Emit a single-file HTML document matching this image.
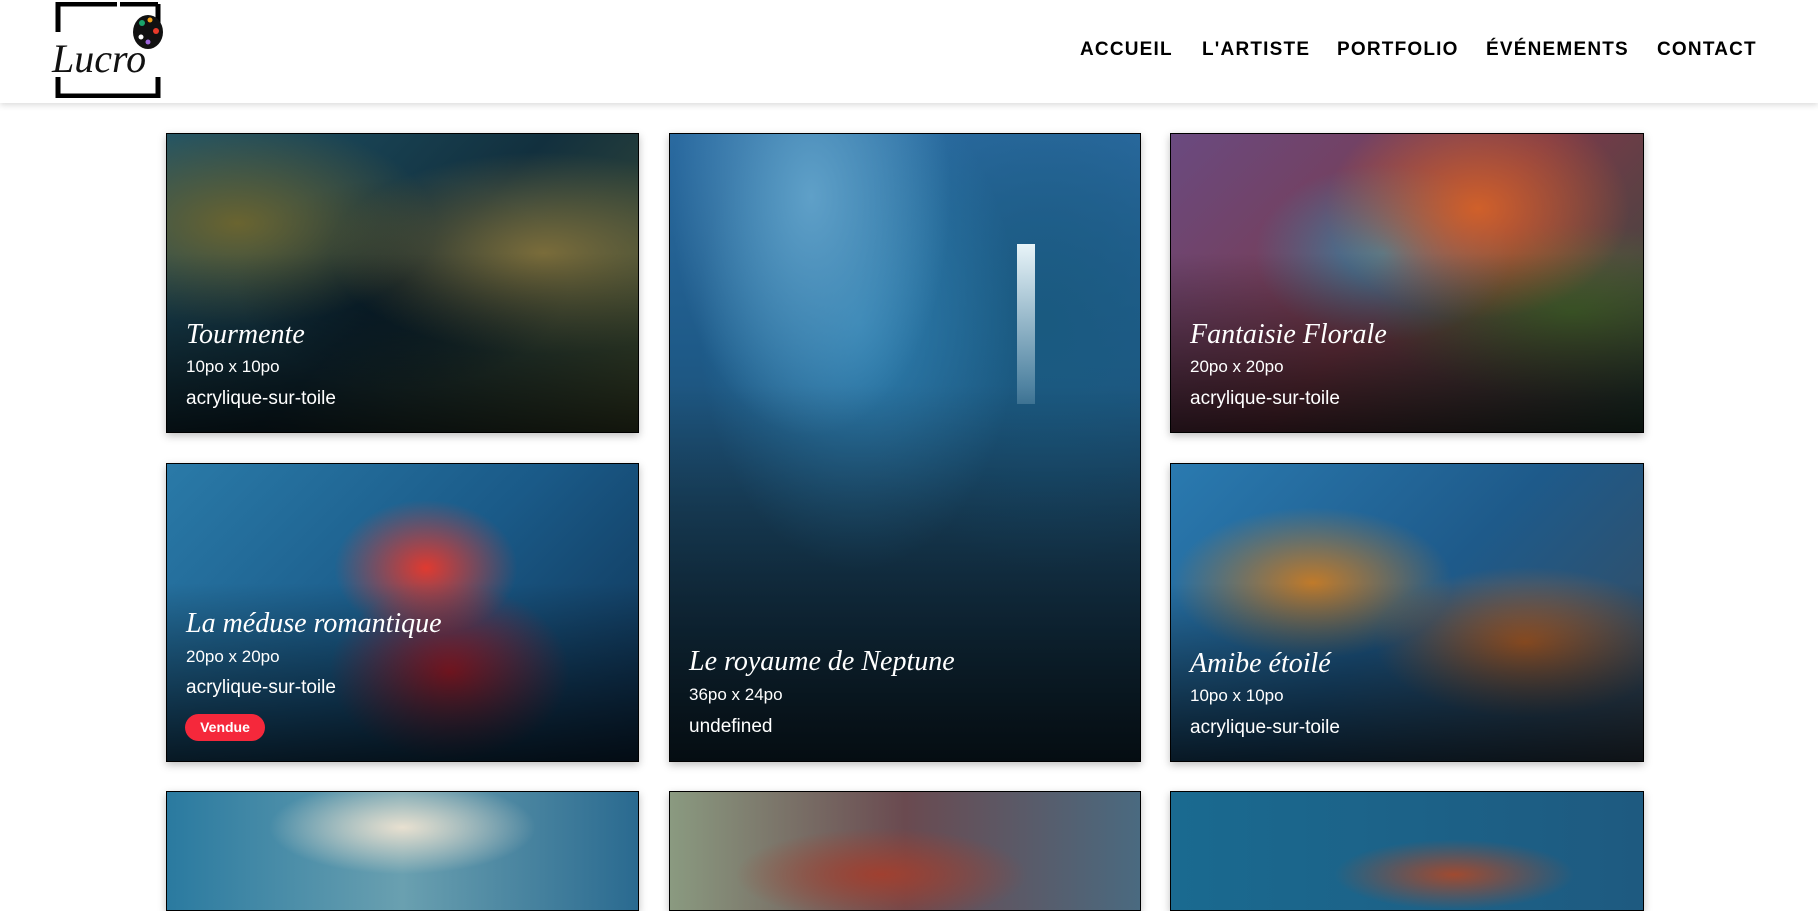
<!DOCTYPE html>
<html><head><meta charset="utf-8"><style>
*{margin:0;padding:0;box-sizing:border-box}
body{width:1818px;height:892px;overflow:hidden;background:#fff;font-family:"Liberation Sans",sans-serif;position:relative}
.hdr{position:absolute;left:0;top:0;width:1818px;height:103px;background:#fff;box-shadow:0 2px 6px rgba(0,0,0,.15);z-index:5}
.nav{position:absolute;top:39px;font-weight:bold;font-size:19px;letter-spacing:1.2px;color:#000}
.card{position:absolute;border:1px solid #000;overflow:hidden;box-shadow:0 3px 8px rgba(0,0,0,.25)}
.card .sh{position:absolute;left:0;right:0;bottom:0;height:60%;background:linear-gradient(to bottom,rgba(0,0,0,0),rgba(0,0,0,.75))}
.t{position:absolute;left:19px;color:#fff;font-family:"Liberation Serif",serif;font-style:italic;font-size:28px}
.d{position:absolute;left:19px;color:#fff;font-size:17px}
.m{position:absolute;left:19px;color:#fff;font-size:19px}
.b{position:absolute;left:18px;width:80px;height:27px;border-radius:14px;background:#f5283b;color:#fff;font-weight:bold;font-size:14px;text-align:center;line-height:27px}
</style></head><body>
<div class="hdr">
<svg style="position:absolute;left:50px;top:2px" width="120" height="96" viewBox="0 0 120 96">
<path d="M8 30 V2 H67 M108 2 V30" stroke="#000" stroke-width="5" fill="none"/>
<path d="M108 2 H70" stroke="#000" stroke-width="5"/>
<path d="M8 75 V94 H108 V75" stroke="#000" stroke-width="5" fill="none"/>
<ellipse cx="98" cy="30" rx="15" ry="17" fill="#111"/>
<circle cx="92" cy="21" r="3" fill="#1aa56a"/><circle cx="100" cy="18" r="2.5" fill="#f3a21b"/><circle cx="106" cy="29" r="3" fill="#e83a2a"/><circle cx="98" cy="40" r="2.5" fill="#9c63d8"/><circle cx="91" cy="35" r="2.5" fill="#fff"/>
<text x="2" y="70" font-family="Liberation Serif" font-style="italic" font-size="40" fill="#111">Lucro</text>
</svg>
<div class="nav" style="left:1080px">ACCUEIL</div>
<div class="nav" style="left:1202px">L'ARTISTE</div>
<div class="nav" style="left:1337px">PORTFOLIO</div>
<div class="nav" style="left:1486px">ÉVÉNEMENTS</div>
<div class="nav" style="left:1657px">CONTACT</div>
</div>

<div class="card" style="left:166px;top:133px;width:473px;height:300px;background:radial-gradient(ellipse at 80% 40%,#7a6c3a 0,transparent 40%),radial-gradient(ellipse at 15% 30%,#6a6430 0,transparent 35%),radial-gradient(ellipse at 50% 50%,#081c28 0,transparent 50%),linear-gradient(135deg,#1f5468,#12303e 50%,#4a5632)">
<div class="sh"></div>
<div class="t" style="top:185px">Tourmente</div><div class="d" style="top:223px">10po x 10po</div><div class="m" style="top:254px">acrylique-sur-toile</div></div>

<div class="card" style="left:669px;top:133px;width:472px;height:629px;background:radial-gradient(ellipse at 30% 10%,#5fa0c8 0,transparent 30%),radial-gradient(ellipse at 40% 30%,#2f80b0 0,transparent 40%),radial-gradient(ellipse at 80% 30%,#1a5a80 0,transparent 40%),linear-gradient(to bottom,#2a6aa0,#1e5a88 35%,#1c4a6a 60%,#143448)">
<div class="sh"></div>
<div style="position:absolute;left:347px;top:110px;width:18px;height:160px;background:linear-gradient(#e8f4f8,rgba(200,230,240,.2))"></div>
<div class="t" style="top:512px">Le royaume de Neptune</div><div class="d" style="top:551px">36po x 24po</div><div class="m" style="top:582px">undefined</div></div>

<div class="card" style="left:1170px;top:133px;width:474px;height:300px;background:radial-gradient(ellipse at 65% 25%,#d0602a 0,transparent 35%),radial-gradient(ellipse at 45% 40%,#3a80a0 0,transparent 35%),radial-gradient(ellipse at 85% 60%,#4a6a30 0,transparent 35%),linear-gradient(135deg,#6a4a80,#7a3a4a 50%,#2a4a3a)">
<div class="sh"></div>
<div class="t" style="top:185px">Fantaisie Florale</div><div class="d" style="top:223px">20po x 20po</div><div class="m" style="top:254px">acrylique-sur-toile</div></div>

<div class="card" style="left:166px;top:463px;width:473px;height:299px;background:radial-gradient(ellipse at 55% 35%,#e03a30 0,transparent 25%),radial-gradient(ellipse at 60% 70%,#b02030 0,transparent 30%),linear-gradient(135deg,#2a7aa8,#1a5a88 50%,#0e3050)">
<div class="sh"></div>
<div class="t" style="top:144px">La méduse romantique</div><div class="d" style="top:183px">20po x 20po</div><div class="m" style="top:213px">acrylique-sur-toile</div><div class="b" style="top:250px">Vendue</div></div>

<div class="card" style="left:1170px;top:463px;width:474px;height:299px;background:radial-gradient(ellipse at 30% 40%,#c07a2a 0,transparent 30%),radial-gradient(ellipse at 75% 60%,#b0602a 0,transparent 30%),linear-gradient(135deg,#2a7ab0,#1e5a8a 50%,#3a4a5a)">
<div class="sh"></div>
<div class="t" style="top:184px">Amibe étoilé</div><div class="d" style="top:222px">10po x 10po</div><div class="m" style="top:253px">acrylique-sur-toile</div></div>

<div class="card" style="left:166px;top:791px;width:473px;height:120px;background:radial-gradient(ellipse at 50% 30%,#e8e0d0 0,transparent 40%),linear-gradient(90deg,#2a7aa0,#6aa0b0 50%,#2a6a90)"></div>
<div class="card" style="left:669px;top:791px;width:472px;height:120px;background:radial-gradient(ellipse at 45% 70%,#a04030 0,transparent 40%),linear-gradient(90deg,#8a9a80,#6a4a50 50%,#4a6a80)"></div>
<div class="card" style="left:1170px;top:791px;width:474px;height:120px;background:radial-gradient(ellipse at 60% 70%,#a04a30 0,transparent 30%),linear-gradient(90deg,#1a6a90,#1e5a80)"></div>
</body></html>
